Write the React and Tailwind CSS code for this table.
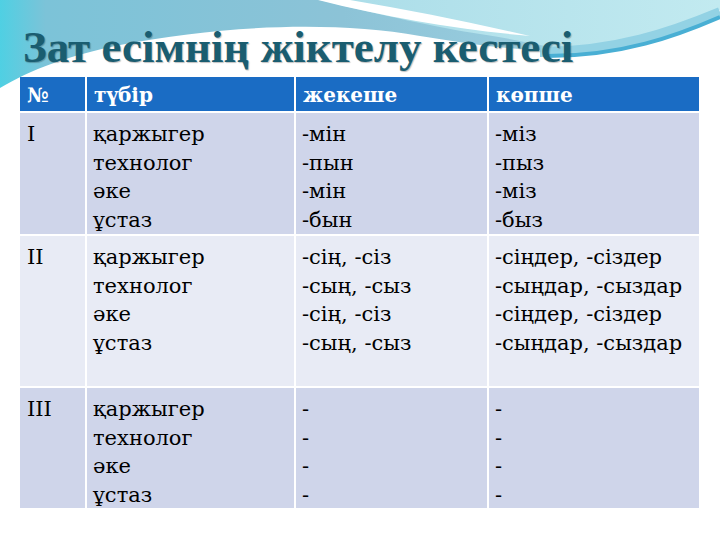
import React from "react";

const roots = ["қаржыгер", "технолог", "әке", "ұстаз"];

const rows = [
  {
    n: "I",
    sing: ["-мін", "-пын", "-мін", "-бын"],
    plur: ["-міз", "-пыз", "-міз", "-быз"],
    bg: "bg-[#cfd5ea]",
    h: "h-[121px]",
  },
  {
    n: "II",
    sing: ["-сің, -сіз", "-сың, -сыз", "-сің, -сіз", "-сың, -сыз"],
    plur: ["-сіңдер, -сіздер", "-сыңдар, -сыздар", "-сіңдер, -сіздер", "-сыңдар, -сыздар"],
    bg: "bg-[#e8ebf5]",
    h: "h-[150px]",
  },
  {
    n: "III",
    sing: ["-", "-", "-", "-"],
    plur: ["-", "-", "-", "-"],
    bg: "bg-[#cfd5ea]",
    h: "h-[120px]",
  },
];

// decorative waves of the slide template
const Background = () => (
  <svg className="absolute inset-0" width="720" height="540" viewBox="0 0 720 540">
    <defs>
      <linearGradient id="lb" x1="0" y1="0" x2="1" y2="0">
        <stop offset="0" stopColor="#4fd0e3" />
        <stop offset="0.08" stopColor="#7cc3d8" />
        <stop offset="0.6" stopColor="#8cc3d7" />
        <stop offset="1" stopColor="#9ccfe0" />
      </linearGradient>
      <linearGradient id="rc" x1="0" y1="0" x2="1" y2="0">
        <stop offset="0" stopColor="#a9dce8" />
        <stop offset="1" stopColor="#c2eaf0" />
      </linearGradient>
    </defs>
    <rect width="720" height="540" fill="#ffffff" />
    <path d="M300,0 H720 V10 C 670,32 620,48 560,50 C 520,52 480,40 440,28 Z" fill="url(#rc)" />
    <path
      d="M0,0 H320 C 380,15 440,28 480,34 C 520,40 545,47 570,50 C 520,52 470,44 420,36 C 330,20 220,26 120,45 C 70,55 30,70 0,88 Z"
      fill="url(#lb)"
    />
    <path d="M318,0 H350 C 410,10 470,22 530,36 C 460,30 390,18 318,0 Z" fill="#ffffff" />
    <path d="M540,52 C 615,52 672,32 720,12" stroke="#93d2e4" strokeWidth="10" fill="none" />
    <path d="M548,56 C 622,56 676,36 720,17" stroke="#49afd4" strokeWidth="4" fill="none" />
  </svg>
);

const Lines = ({ items }) => (
  <>
    {items.map((x, i) => (
      <div key={i}>{x}</div>
    ))}
  </>
);

export default function App() {
  return (
    <div className="relative w-[720px] h-[540px] overflow-hidden bg-white">
      <Background />
      <div className="relative pt-[21px] pl-[23px]">
        <h1 className="font-['Liberation_Serif',serif] text-[45px] leading-[52px] font-bold text-[#1a5d70] [text-shadow:1px_1px_1px_rgba(0,0,0,0.25)]">
          Зат есімнің жіктелу кестесі
        </h1>
      </div>
      <div className="relative mt-[4px] ml-[20px] w-[673px] bg-white/70 font-['DejaVu_Serif',serif] text-[21px] leading-[28.7px] text-black">
        <div className="grid grid-cols-[65px_207px_191px_210px] gap-[2px]">
          {["№", "түбір", "жекеше", "көпше"].map((t) => (
            <div key={t} className="h-[34px] bg-[#1a6cc4] pl-[7px] pt-[2px] flex items-center font-bold text-white text-[20px]">
              {t}
            </div>
          ))}
          {rows.map((r) => (
            <React.Fragment key={r.n}>
              <div className={`${r.bg} ${r.h} pl-[7px] pt-[7px]`}>{r.n}</div>
              <div className={`${r.bg} ${r.h} pl-[6px] pt-[7px]`}>
                <Lines items={roots} />
              </div>
              <div className={`${r.bg} ${r.h} pl-[6px] pt-[7px]`}>
                <Lines items={r.sing} />
              </div>
              <div className={`${r.bg} ${r.h} pl-[6px] pt-[7px]`}>
                <Lines items={r.plur} />
              </div>
            </React.Fragment>
          ))}
        </div>
      </div>
    </div>
  );
}
